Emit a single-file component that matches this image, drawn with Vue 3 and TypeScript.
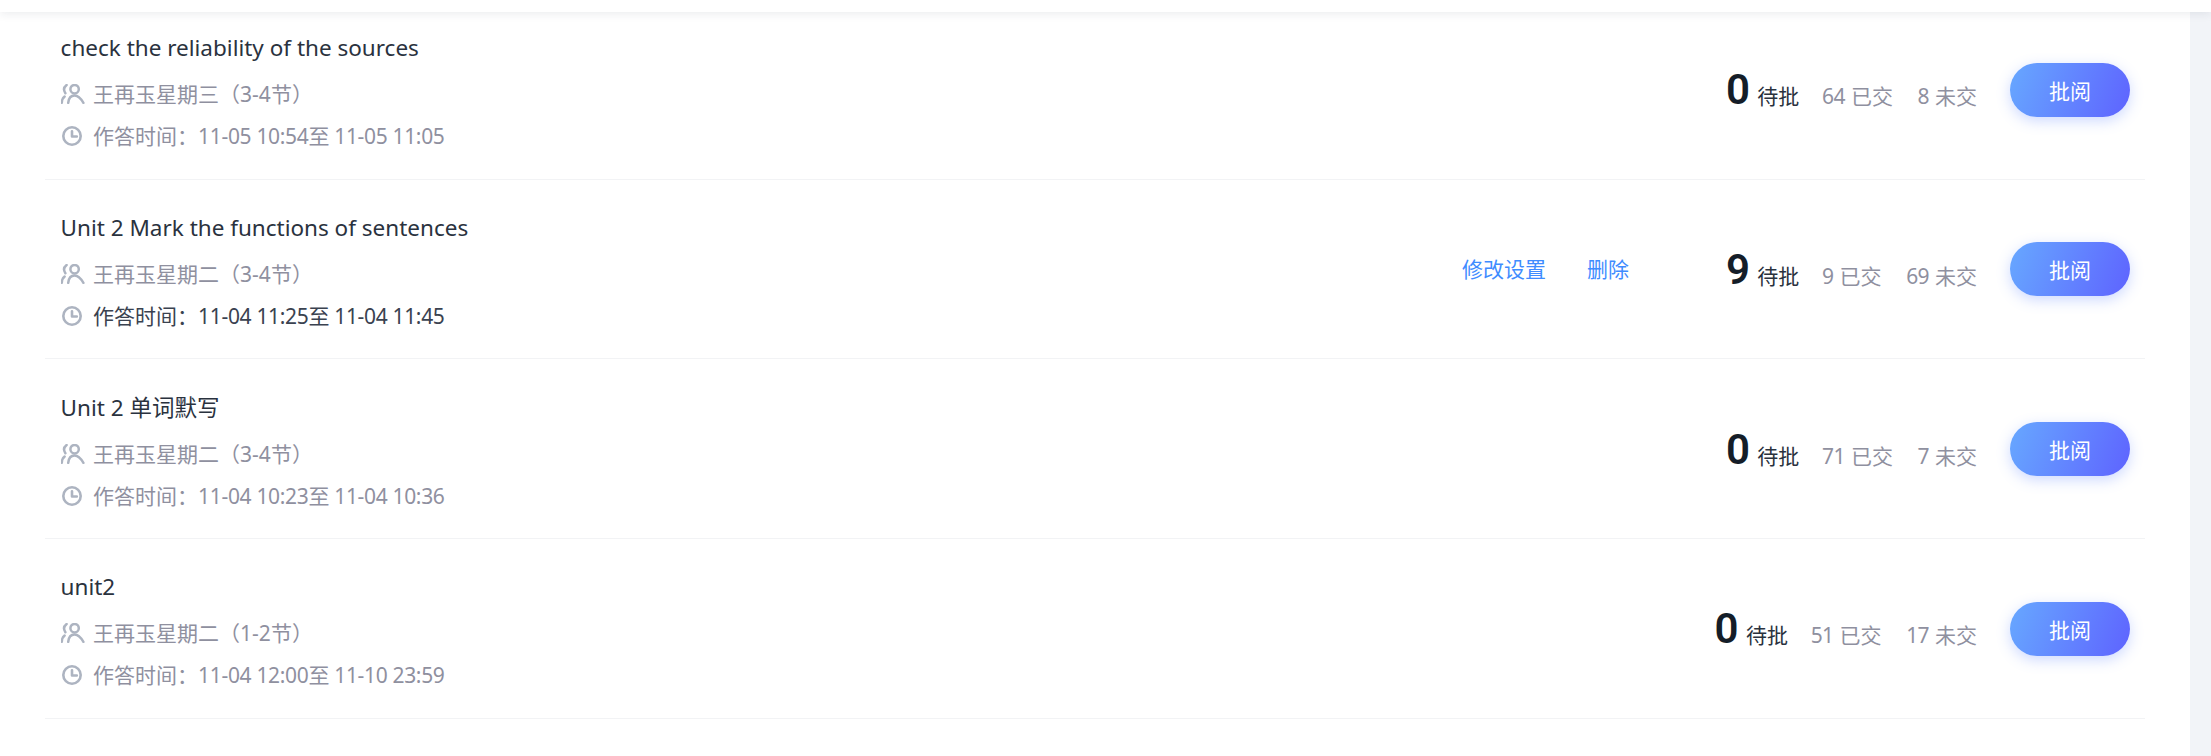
<script setup lang="ts">
interface Task {
  title: string;
  klass: string;
  time: string;
  pending: number;
  done: number;
  missing: number;
  active?: boolean;
}

const tasks: Task[] = [
  { title: 'check the reliability of the sources', klass: '王再玉星期三（3-4节）', time: '11-05 10:54至 11-05 11:05', pending: 0, done: 64, missing: 8 },
  { title: 'Unit 2 Mark the functions of sentences', klass: '王再玉星期二（3-4节）', time: '11-04 11:25至 11-04 11:45', pending: 9, done: 9, missing: 69, active: true },
  { title: 'Unit 2 单词默写', klass: '王再玉星期二（3-4节）', time: '11-04 10:23至 11-04 10:36', pending: 0, done: 71, missing: 7 },
  { title: 'unit2', klass: '王再玉星期二（1-2节）', time: '11-04 12:00至 11-10 23:59', pending: 0, done: 51, missing: 17 },
];
</script>

<template>
  <div class="page">
    <div class="topbar"></div>
    <div class="layout">
      <main class="content">
        <div v-for="task in tasks" :key="task.time" class="task" :class="{ 'task--active': task.active }">
          <div class="task__info">
            <div class="task__title">{{ task.title }}</div>
            <div class="task__meta">
              <svg class="icon" viewBox="0 0 24 20" fill="none" stroke="#adb4c1" stroke-width="2.5" stroke-linecap="round">
                <circle cx="13.6" cy="5.2" r="4.2" />
                <path d="M7.2 18.8c.5-4.8 3-7.300 6.400-7.300s6 2.500 8.800 7.300" />
                <path d="M5.600 1C3 3 2.200 6 4.400 9.200" />
                <path d="M.8 18.800c0-2.800 1-4.800 2.800-6.200" />
              </svg>
              <span>{{ task.klass }}</span>
            </div>
            <div class="task__meta task__time">
              <svg class="icon" viewBox="0 0 24 20" fill="none" stroke="#adb4c1" stroke-width="2.6" stroke-linecap="round" stroke-linejoin="round">
                <circle cx="11" cy="10" r="8.700" />
                <path d="M11 5.200v5.300h4.800" />
              </svg>
              <span>作答时间：<span class="task__range">{{ task.time }}</span></span>
            </div>
          </div>
          <div v-if="task.active" class="task__actions">
            <a>修改设置</a>
            <a>删除</a>
          </div>
          <div class="task__stats">
            <span class="stat-pending"><b>{{ task.pending }}</b> 待批</span>
            <span class="stat"><span class="stat__num">{{ task.done }}</span>已交</span>
            <span class="stat"><span class="stat__num">{{ task.missing }}</span>未交</span>
          </div>
          <button class="review-btn">批阅</button>
        </div>
      </main>
      <aside class="side"></aside>
    </div>
  </div>
</template>

<style>
html,
body {
  margin: 0;
  background: #fff;
  overflow: hidden;
}
</style>

<style scoped>
.page {
  width: 2211px;
  height: 756px;
  overflow: hidden;
  position: relative;
  font-family: "Noto Sans", "Noto Sans CJK SC", sans-serif;
}

.topbar {
  position: absolute;
  top: 0;
  left: 0;
  right: 0;
  height: 12px;
  background: #fff;
  box-shadow: 0 2px 10px rgba(30, 40, 70, 0.09);
  z-index: 2;
}

.layout {
  display: flex;
  height: 100%;
}

.content {
  flex: 1;
  padding: 0 45px;
}

.side {
  width: 21px;
  background: #f2f4f8;
}

.task {
  height: 179.67px;
  box-sizing: border-box;
  border-bottom: 1.4px solid #f2f3f5;
  padding: 1px 15px 0 15.6px;
  display: flex;
  align-items: center;
}

.task__info {
  flex: 1;
  display: flex;
  flex-direction: column;
  gap: 12px;
  margin-top: 4px;
}

.task__title {
  font-size: 22.5px;
  line-height: 32px;
  margin-bottom: 3px;
  color: #2a323e;
}

.task__meta {
  display: flex;
  align-items: center;
  gap: 8.5px;
  font-size: 21px;
  line-height: 30px;
  color: #8f909f;
}

.task--active .task__time {
  color: #3a4250;
}

.task__range {
  letter-spacing: -0.33px;
}

.icon {
  width: 24px;
  height: 20px;
  flex: none;
}

.task__actions {
  display: flex;
  gap: 41px;
  margin-right: 97px;
  margin-top: -2px;
  font-size: 21px;
  color: #3f8cff;
}

.task__stats {
  display: flex;
  align-items: baseline;
  gap: 24.7px;
  font-size: 21px;
  color: #8f909f;
  margin-top: 0;
}

.stat__num {
  letter-spacing: -0.6px;
  margin-right: 6px;
}

.stat-pending {
  color: #2a323e;
  margin-right: -2px;
}

.stat-pending b {
  font-family: Roboto, sans-serif;
  font-size: 42px;
  font-weight: 600;
  color: #141d28;
  margin-right: 2px;
}

.review-btn {
  width: 120px;
  height: 54px;
  margin-left: 33px;
  border: none;
  border-radius: 27px;
  color: #fff;
  font: inherit;
  font-size: 21px;
  background: linear-gradient(110deg, #67a8ff, #5e63ff);
  box-shadow: 0 4px 14px rgba(90, 130, 255, 0.3);
}
</style>
